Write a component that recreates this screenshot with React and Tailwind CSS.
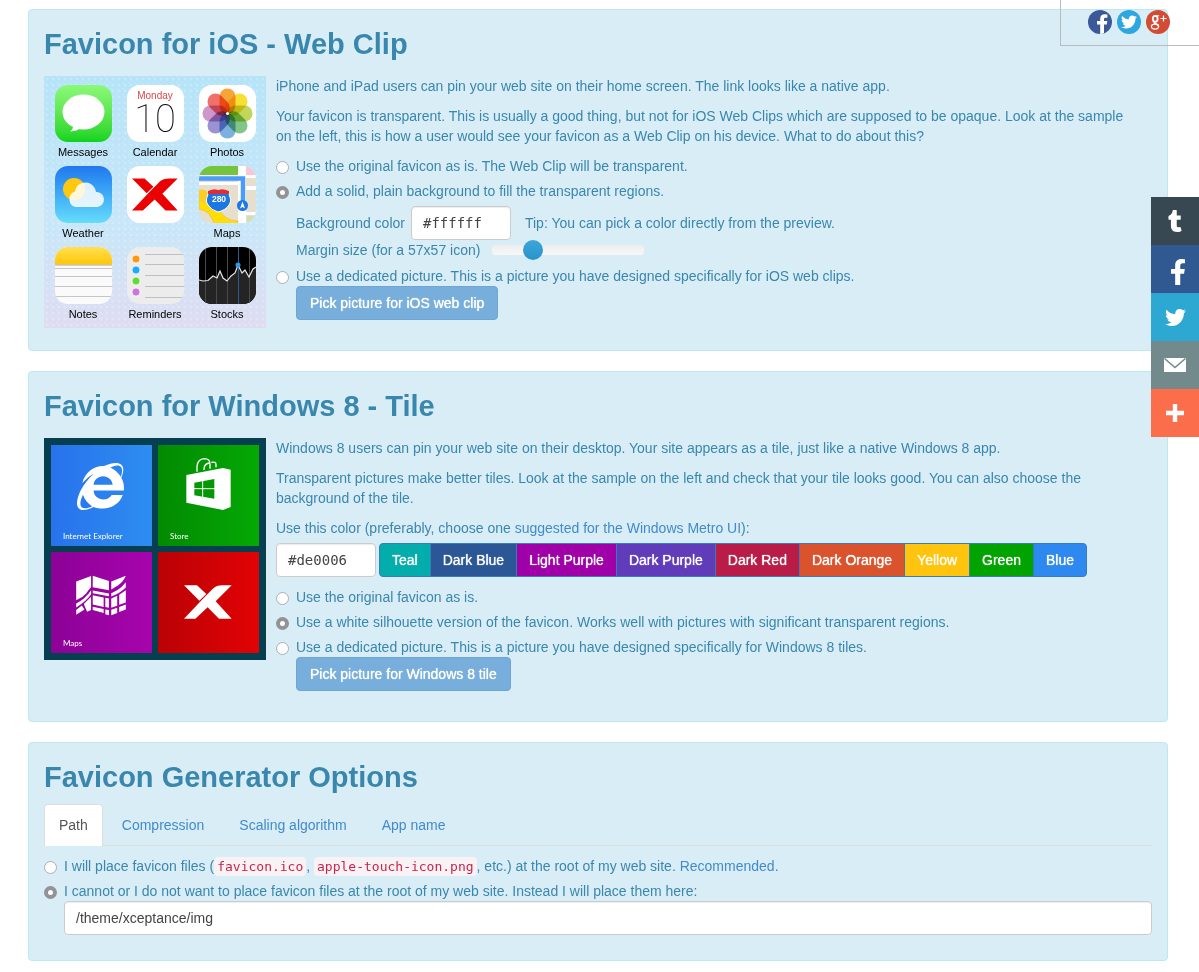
import React from "react";
import { FaFacebookF, FaTwitter, FaTumblr, FaInternetExplorer } from "react-icons/fa";

function Panel({ title, children }) {
  return (
    <section className="rounded border border-[#bce8f1] bg-[#d9edf7] px-[15px] pt-[18px]">
      <h2 className="mb-2.5 text-[29px] leading-[33px] font-bold text-[#3a87ad]">{title}</h2>
      {children}
    </section>
  );
}

function Radio({ id, name, checked = false, children }) {
  return (
    <div className="flex items-center gap-[7px]">
      <input
        id={id}
        type="radio"
        name={name}
        defaultChecked={checked}
        className="mt-0.5 size-[13px] shrink-0 appearance-none rounded-full border border-[#a9afb3] bg-white checked:border-4 checked:border-[#929297]"
      />
      <label htmlFor={id}>{children}</label>
    </div>
  );
}

const fieldClass =
  "h-[34px] rounded border border-[#cccccc] bg-white px-[11px] text-[14px] text-[#444444] shadow-[inset_0_1px_1px_rgba(0,0,0,0.075)]";

function PickButton({ children }) {
  return (
    <button
      type="button"
      className="ml-5 h-[34px] self-start rounded border border-[#6fa5d4] bg-[#77aedb] px-[13px] text-[14px] text-white [text-shadow:0_0_1px_currentColor]"
    >
      {children}
    </button>
  );
}

function XMark({ className }) {
  return (
    <svg viewBox="0 0 144 100" className={className} fill="currentColor" aria-hidden="true">
      <path d="M0 0H39L67 26L46 46Z" />
      <path d="M0 100H34L71 66L105 100H143L95 48L143 0H122C100 0 92 4 82 15L54 43Z" />
    </svg>
  );
}

function AppIcon({ className = "", label, children }) {
  return (
    <div className="flex flex-col items-center">
      <div className={`size-[57px] overflow-hidden rounded-[13px] ${className}`}>{children}</div>
      <span className="mt-[3px] h-3.5 text-[11px] leading-[14px] text-black">{label}</span>
    </div>
  );
}

const petals = [
  ["#f79a22", 0],
  ["#f6dc1e", 45],
  ["#bcd14a", 90],
  ["#74bf7c", 135],
  ["#6ba8dc", 180],
  ["#8f86cc", 225],
  ["#c98bc4", 270],
  ["#f0625a", 315],
];

function IosPreview() {
  return (
    <div className="h-[252px] w-[222px] shrink-0 bg-[radial-gradient(circle_at_3px_3px,rgba(255,255,255,0.2)_1px,transparent_2px),radial-gradient(circle_at_0px_0px,rgba(255,255,255,0.2)_1px,transparent_2px),linear-gradient(#b4e3f8,#c8e6f8_60%,#dedcf1)] bg-[length:6px_6px,6px_6px,100%_100%] px-[3px] pt-[9px]">
      <div className="grid grid-cols-3 gap-y-[7px]">
        <AppIcon label="Messages" className="bg-linear-to-b from-[#8bf977] to-[#06d41c]">
          <svg viewBox="0 0 57 57" fill="#fff" aria-hidden="true">
            <ellipse cx="28.5" cy="27" rx="21" ry="17.5" />
            <path d="M18 38Q19 44 15 46.5Q23 46 27 42Z" />
          </svg>
        </AppIcon>
        <AppIcon label="Calendar" className="bg-white text-center">
          <div className="pt-1.5 text-[10px] leading-[10px] text-[#d9474b]">Monday</div>
          <div className="font-['Roboto',sans-serif] text-[38px] leading-[36px] font-thin text-black">10</div>
        </AppIcon>
        <AppIcon label="Photos" className="bg-white">
          <svg viewBox="0 0 57 57" aria-hidden="true">
            {petals.map(([color, angle]) => (
              <rect
                key={angle}
                x="20.5"
                y="3.5"
                width="16"
                height="25"
                rx="8"
                fill={color}
                fillOpacity="0.9"
                className="mix-blend-multiply"
                transform={`rotate(${angle} 28.5 28.5)`}
              />
            ))}
            <circle cx="28.5" cy="28.5" r="1.5" fill="#fff" />
          </svg>
        </AppIcon>

        <AppIcon label="Weather" className="bg-linear-to-b from-[#2277ee] to-[#66dcfb]">
          <svg viewBox="0 0 57 57" aria-hidden="true">
            <circle cx="19" cy="23" r="11" fill="#fdc80d" />
            <path
              d="M21 41a8 8 0 0 1-1-15.500a10.500 10.500 0 0 1 19-4.500a9 9 0 0 1 2 5a7.500 7.500 0 0 1 1 15Z"
              fill="#fff"
              fillOpacity="0.85"
            />
          </svg>
        </AppIcon>
        <AppIcon label="" className="bg-white">
          <XMark className="mx-auto mt-3 h-[33px] w-[46px] text-[#ea0202]" />
        </AppIcon>
        <AppIcon label="Maps" className="bg-[#e6dfce]">
          <svg viewBox="0 0 57 57" aria-hidden="true">
            <path d="M0 0H39V9H0Z" fill="#74c53b" />
            <path d="M47 0H57V9H47Z" fill="#fac6d3" />
            <path d="M39 0H47V57H39ZM0 9H57V12H0ZM0 16H39V19H0ZM47 20H57V24H47Z" fill="#fff" />
            <path d="M47 46H57V49H47Z" fill="#fff" />
            <path d="M48 50H57V57H48Z" fill="#d4dfb0" />
            <path d="M0 34C14 38 20 44 26 51Q31 55 39 55V60H16C12 48 8 45 0 43Z" fill="#ffdd05" stroke="#f5c341" />
            <path d="M0 12.500H44V42" fill="none" stroke="#4a9cf8" strokeWidth="4.500" />
            <path d="M0 24Q6 22 9 27V35H0Z" fill="#fdcd22" />
            <path d="M9 25Q15 22 19 24Q24 22 30 25C29 30 34 33 30 39Q27 44 19 46Q12 44 9 39C5 33 10 30 9 25Z" fill="#1a78e0" stroke="#fff" />
            <path d="M9 25Q15 22 19 24Q24 22 30 25L30 28H9Z" fill="#e02d35" />
            <text x="20" y="36" textAnchor="middle" fontSize="8.500" fontWeight="bold" fill="#fff">280</text>
            <circle cx="43.500" cy="39.500" r="5.500" fill="#1a78e8" />
            <path d="M43.500 35.500L46 42.500L43.500 41L41 42.500Z" fill="#fff" />
          </svg>
        </AppIcon>

        <AppIcon label="Notes" className="bg-[#fafafa]">
          <svg viewBox="0 0 57 57" aria-hidden="true">
            <defs>
              <linearGradient id="notes-top" x2="0" y2="1">
                <stop stopColor="#ffdf52" />
                <stop offset="1" stopColor="#ffc708" />
              </linearGradient>
            </defs>
            <rect width="57" height="17.500" fill="url(#notes-top)" />
            <path d="M0 18H57" stroke="#b9aa80" />
            <path d="M0 21.500H57M0 29.500H57M0 39.500H57M0 49.500H57" stroke="#c6c6c8" />
          </svg>
        </AppIcon>
        <AppIcon label="Reminders" className="bg-[#ececec]">
          <svg viewBox="0 0 57 57" aria-hidden="true">
            <path d="M18 7.500H57M18 17.500H57M18 28.500H57M18 39.500H57M18 50.500H57" stroke="#bfbfc1" />
            <g stroke="#fff" strokeOpacity="0.7">
              <circle cx="9" cy="12" r="4" fill="#ff9713" />
              <circle cx="9" cy="23" r="4" fill="#1cacf9" />
              <circle cx="9" cy="34" r="4" fill="#62da38" />
              <circle cx="9" cy="45" r="4" fill="#cb73e1" />
            </g>
          </svg>
        </AppIcon>
        <AppIcon label="Stocks" className="bg-black">
          <svg viewBox="0 0 57 57" aria-hidden="true">
            <path d="M0 33L4 34L9 33.500L14 29L18 31L21 24L24 31L28 34L32 29L36 26L39 18L43 26L46 23L50 30L54 22L57 20V57H0Z" fill="#242424" />
            <path d="M6.500 0V57M17.500 0V57M28.500 0V57M50.500 0V57" stroke="#4a4a4a" />
            <path d="M39.500 0V57" stroke="#2b5c96" />
            <path d="M0 33L4 34L9 33.500L14 29L18 31L21 24L24 31L28 34L32 29L36 26L39 18L43 26L46 23L50 30L54 22L57 20" fill="none" stroke="#e6e6e6" strokeWidth="1.200" />
            <circle cx="39" cy="18" r="2.500" fill="#2c9af2" />
          </svg>
        </AppIcon>
      </div>
    </div>
  );
}

function Tile({ className, label, children }) {
  return (
    <div className={`flex h-[101px] flex-col justify-between text-white ${className}`}>
      {children}
      <span className="mb-1 ml-3 h-3 font-['Lato',sans-serif] text-[8px] leading-[12px]">{label}</span>
    </div>
  );
}

function WindowsPreview() {
  return (
    <div className="grid w-[222px] shrink-0 grid-cols-2 gap-1.5 self-start bg-[#053f50] p-[7px]">
      <Tile label="Internet Explorer" className="bg-linear-to-r from-[#2872ec] to-[#2e8df0]">
        <FaInternetExplorer className="mt-[18px] ml-[26px] size-[47px]" />
      </Tile>
      <Tile label="Store" className="bg-linear-to-r from-[#028a02] to-[#05a805]">
        <svg viewBox="0 0 133 156" className="mt-[13px] ml-7 h-[52px] w-[45px]" aria-hidden="true">
          <path d="M0 51L110 30L133 35V147L110 156L0 134Z" fill="#fff" />
          <path d="M24 74L84 63V122L24 112Z" fill="#049804" />
          <path d="M49 65V120M22 92H86" stroke="#fff" strokeWidth="3" />
          <path d="M32 41V25Q34 3 54 2Q71 2 71 19V32M53 36V32Q54 16 71 15M75 13Q89 10 89 20V28" fill="none" stroke="#fff" strokeWidth="4" />
        </svg>
      </Tile>
      <Tile label="Maps" className="bg-linear-to-r from-[#8c0296] to-[#a704ad]">
        <svg viewBox="0 0 150 124" className="mt-[23px] ml-[25px] h-[41px] w-[50px]" fill="currentColor" aria-hidden="true">
          <path d="M0 20L45 3V36Q38 44 30 56Q18 70 0 76Z" />
          <path d="M50 2L99 18V46L50 37Z" />
          <path d="M106 20L150 2Q144 18 126 32L106 44Z" />
          <path d="M0 86Q28 72 45 46V58Q34 76 0 98Z" />
          <path d="M0 120V106L17 92L25 104Z" />
          <path d="M23 88L45 66V106L33 111Z" />
          <path d="M50 47L99 56V64L50 55Z" />
          <path d="M50 61L83 68V97L50 89Z" />
          <path d="M88 69L99 71V99L88 97Z" />
          <path d="M50 96L83 103V115L50 106Z" />
          <path d="M88 104L99 106V122L88 119Z" />
          <path d="M106 55L124 46Q140 36 150 22V38Q132 56 106 65Z" />
          <path d="M106 71L124 63V93L106 99Z" />
          <path d="M130 60L150 46V83L130 90Z" />
          <path d="M106 105L124 99V115L106 122Z" />
          <path d="M130 97L150 89V104L130 112Z" />
        </svg>
      </Tile>
      <Tile label="" className="bg-linear-to-r from-[#ba0205] to-[#e20204]">
        <XMark className="mt-[33px] ml-[26px] h-[34px] w-12" />
      </Tile>
    </div>
  );
}

const tileColors = [
  ["Teal", "bg-[#03adab] rounded-l"],
  ["Dark Blue", "bg-[#2b5797]"],
  ["Light Purple", "bg-[#9f00a7]"],
  ["Dark Purple", "bg-[#603cba]"],
  ["Dark Red", "bg-[#b91d47]"],
  ["Dark Orange", "bg-[#da532c]"],
  ["Yellow", "bg-[#ffc40d]"],
  ["Green", "bg-[#00a300]"],
  ["Blue", "bg-[#2d89ef] rounded-r"],
];

function ShareCorner() {
  return (
    <div className="absolute top-0 right-0 flex h-[46px] w-[139px] gap-[5px] border-b border-l border-[#bbbbbb] pt-2.5 pl-[27px]">
      <a href="#facebook" aria-label="Facebook" className="size-6">
        <svg viewBox="0 0 24 24" aria-hidden="true">
          <circle cx="12" cy="12" r="12" fill="#3b5998" />
          <path d="M12.200 24V14.500H9V11H12.200V8.600C12.200 5.600 14 4.200 16.800 4.200L19.400 4.400V7.800H17.600C16.400 7.800 16 8.300 16 9.300V11H19.300L18.800 14.500H16V23.300Q14 24 12.200 24Z" fill="#fff" />
        </svg>
      </a>
      <a href="#twitter" aria-label="Twitter" className="flex size-6 items-center justify-center rounded-full bg-[#2ca7df] text-white">
        <FaTwitter className="size-4" />
      </a>
      <a href="#googleplus" aria-label="Google Plus" className="size-6">
        <svg viewBox="0 0 24 24" fill="none" stroke="#fff" aria-hidden="true">
          <circle cx="12" cy="12" r="12" fill="#d34b35" stroke="none" />
          <ellipse cx="9.200" cy="8.800" rx="2.400" ry="3" strokeWidth="1.800" />
          <path d="M10 5.800H13.200" strokeWidth="1" />
          <path d="M9 11.500C7.200 13 9 13.400 10.800 14.200Q12.600 15 12.500 16.500" strokeWidth="1.500" />
          <ellipse cx="9" cy="16.600" rx="3.600" ry="2.500" strokeWidth="1.200" />
          <path d="M17.500 5.500V11.500M14.500 8.500H20.500" strokeWidth="1.200" />
        </svg>
      </a>
    </div>
  );
}

const railItem = "flex size-12 items-center justify-center text-white";

function ShareRail() {
  return (
    <nav aria-label="Share" className="absolute top-[197px] right-0 flex flex-col">
      <a href="#tumblr" aria-label="Tumblr" className={`${railItem} bg-[#384853]`}>
        <FaTumblr className="size-[22px]" />
      </a>
      <a href="#facebook-share" aria-label="Facebook" className={`${railItem} bg-[#305891]`}>
        <FaFacebookF className="ml-1.5 mt-1.5 size-[26px]" />
      </a>
      <a href="#twitter-share" aria-label="Twitter" className={`${railItem} bg-[#2ca8d2]`}>
        <FaTwitter className="size-[21px]" />
      </a>
      <a href="#email" aria-label="Email" className={`${railItem} bg-[#738a8d]`}>
        <svg viewBox="0 0 22 14" className="h-3.5 w-[22px]" aria-hidden="true">
          <path d="M0 0H22V14H0Z" fill="#fff" />
          <path d="M0.500 0.500L11 9.500L21.500 0.500" fill="none" stroke="#738a8d" strokeWidth="1.500" />
        </svg>
      </a>
      <a href="#more" aria-label="More" className={`${railItem} bg-[#fc6d4c]`}>
        <svg viewBox="0 0 18 18" className="size-[18px]" aria-hidden="true">
          <path d="M6.800 0H11.200V6.800H18V11.200H11.200V18H6.800V11.200H0V6.800H6.800Z" fill="#fff" />
        </svg>
      </a>
    </nav>
  );
}

const tab = "rounded-t px-4 pt-[11px] pb-2.5 leading-[20px] text-[#428bca]";
const codeClass =
  "rounded bg-[#f9f2f4] px-[3px] py-0.5 font-['DejaVu_Sans_Mono',monospace] text-[13px] leading-[16px] text-[#c7254e]";

export default function App() {
  return (
    <div className="relative bg-white font-['Liberation_Sans',Arial,sans-serif] text-[14px] leading-[20px] text-[#3a87ad]">
      <main className="flex flex-col gap-5 pt-[9px] pr-[31px] pb-[11px] pl-7">
        <Panel title="Favicon for iOS - Web Clip">
          <div className="flex gap-2.5 pt-[5px] pb-[22px]">
            <IosPreview />
            <div className="flex min-w-0 flex-1 flex-col pr-4 pb-2">
              <p className="mb-2.5">
                iPhone and iPad users can pin your web site on their home screen. The link looks like a native app.
              </p>
              <p className="mb-2.5">
                Your favicon is transparent. This is usually a good thing, but not for iOS Web Clips which are supposed
                to be opaque. Look at the sample on the left, this is how a user would see your favicon as a Web Clip
                on his device. What to do about this?
              </p>
              <div className="flex flex-col gap-[5px]">
                <Radio id="ios-original" name="ios">
                  Use the original favicon as is. The Web Clip will be transparent.
                </Radio>
                <Radio id="ios-solid" name="ios" checked>
                  Add a solid, plain background to fill the transparent regions.
                </Radio>
              </div>
              <div className="mt-[5px] ml-5 flex items-center">
                <label htmlFor="ios-color">Background color</label>
                <input
                  id="ios-color"
                  defaultValue="#ffffff"
                  className={`${fieldClass} ml-1.5 w-[100px] font-['DejaVu_Sans_Mono',monospace]`}
                />
                <span className="ml-3.5">Tip: You can pick a color directly from the preview.</span>
              </div>
              <div className="mb-1.5 ml-5 flex items-center gap-3">
                <label htmlFor="ios-margin">Margin size (for a 57x57 icon)</label>
                <input
                  id="ios-margin"
                  type="range"
                  defaultValue="23"
                  className="h-5 w-[152px] appearance-none bg-transparent [&::-webkit-slider-runnable-track]:h-2.5 [&::-webkit-slider-runnable-track]:rounded [&::-webkit-slider-runnable-track]:bg-linear-to-b [&::-webkit-slider-runnable-track]:from-[#eeeeee] [&::-webkit-slider-runnable-track]:to-[#f8f8f8] [&::-webkit-slider-thumb]:-mt-[5px] [&::-webkit-slider-thumb]:size-5 [&::-webkit-slider-thumb]:appearance-none [&::-webkit-slider-thumb]:rounded-full [&::-webkit-slider-thumb]:bg-linear-to-b [&::-webkit-slider-thumb]:from-[#3ca6dc] [&::-webkit-slider-thumb]:to-[#2b93cb]"
                />
              </div>
              <Radio id="ios-dedicated" name="ios">
                Use a dedicated picture. This is a picture you have designed specifically for iOS web clips.
              </Radio>
              <PickButton>Pick picture for iOS web clip</PickButton>
            </div>
          </div>
        </Panel>

        <Panel title="Favicon for Windows 8 - Tile">
          <div className="flex gap-2.5 pt-[5px] pb-[30px]">
            <WindowsPreview />
            <div className="flex min-w-0 flex-1 flex-col pr-4">
              <p className="mb-2.5">
                Windows 8 users can pin your web site on their desktop. Your site appears as a tile, just like a native
                Windows 8 app.
              </p>
              <p className="mb-2.5">
                Transparent pictures make better tiles. Look at the sample on the left and check that your tile looks
                good. You can also choose the background of the tile.
              </p>
              <label htmlFor="tile-color">
                Use this color (preferably, choose one{" "}
                <a href="#metro" className="text-[#428bca]">
                  suggested for the Windows Metro UI
                </a>
                ):
              </label>
              <div className="mt-[5px] mb-2.5 flex gap-[3px]">
                <input
                  id="tile-color"
                  defaultValue="#de0006"
                  className={`${fieldClass} w-[100px] font-['DejaVu_Sans_Mono',monospace]`}
                />
                <div className="flex -space-x-px">
                  {tileColors.map(([name, color]) => (
                    <button
                      key={name}
                      type="button"
                      className={`h-[34px] border border-[#357ebd] px-3 text-[14px] whitespace-nowrap text-white [text-shadow:0_0_1px_currentColor] ${color}`}
                    >
                      {name}
                    </button>
                  ))}
                </div>
              </div>
              <div className="flex flex-col gap-[5px]">
                <Radio id="tile-original" name="tile">
                  Use the original favicon as is.
                </Radio>
                <Radio id="tile-white" name="tile" checked>
                  Use a white silhouette version of the favicon. Works well with pictures with significant transparent
                  regions.
                </Radio>
                <Radio id="tile-dedicated" name="tile">
                  Use a dedicated picture. This is a picture you have designed specifically for Windows 8 tiles.
                </Radio>
              </div>
              <PickButton>Pick picture for Windows 8 tile</PickButton>
            </div>
          </div>
        </Panel>

        <Panel title="Favicon Generator Options">
          <div className="pb-[25px]">
            <nav aria-label="Options" className="mb-2.5 flex gap-[3px] border-b border-[#dddddd]">
              <a
                href="#path"
                aria-current="page"
                className="-mb-px rounded-t border border-b-0 border-[#dddddd] bg-white px-3.5 pt-2.5 pb-[11px] leading-[20px] text-[#555555]"
              >
                Path
              </a>
              <a href="#compression" className={tab}>Compression</a>
              <a href="#scaling" className={tab}>Scaling algorithm</a>
              <a href="#app-name" className={tab}>App name</a>
            </nav>
            <div className="flex flex-col gap-[5px]">
              <Radio id="path-root" name="path">
                I will place favicon files (<code className={codeClass}>favicon.ico</code>,{" "}
                <code className={codeClass}>apple-touch-icon.png</code>, etc.) at the root of my web site.{" "}
                <a href="#recommended" className="text-[#428bca]">Recommended</a>.
              </Radio>
              <Radio id="path-custom" name="path" checked>
                I cannot or I do not want to place favicon files at the root of my web site. Instead I will place them
                here:
              </Radio>
            </div>
            <div className="flex pl-5">
              <input aria-label="Favicon path" defaultValue="/theme/xceptance/img" className={`${fieldClass} min-w-0 flex-1`} />
            </div>
          </div>
        </Panel>
      </main>
      <ShareCorner />
      <ShareRail />
    </div>
  );
}
